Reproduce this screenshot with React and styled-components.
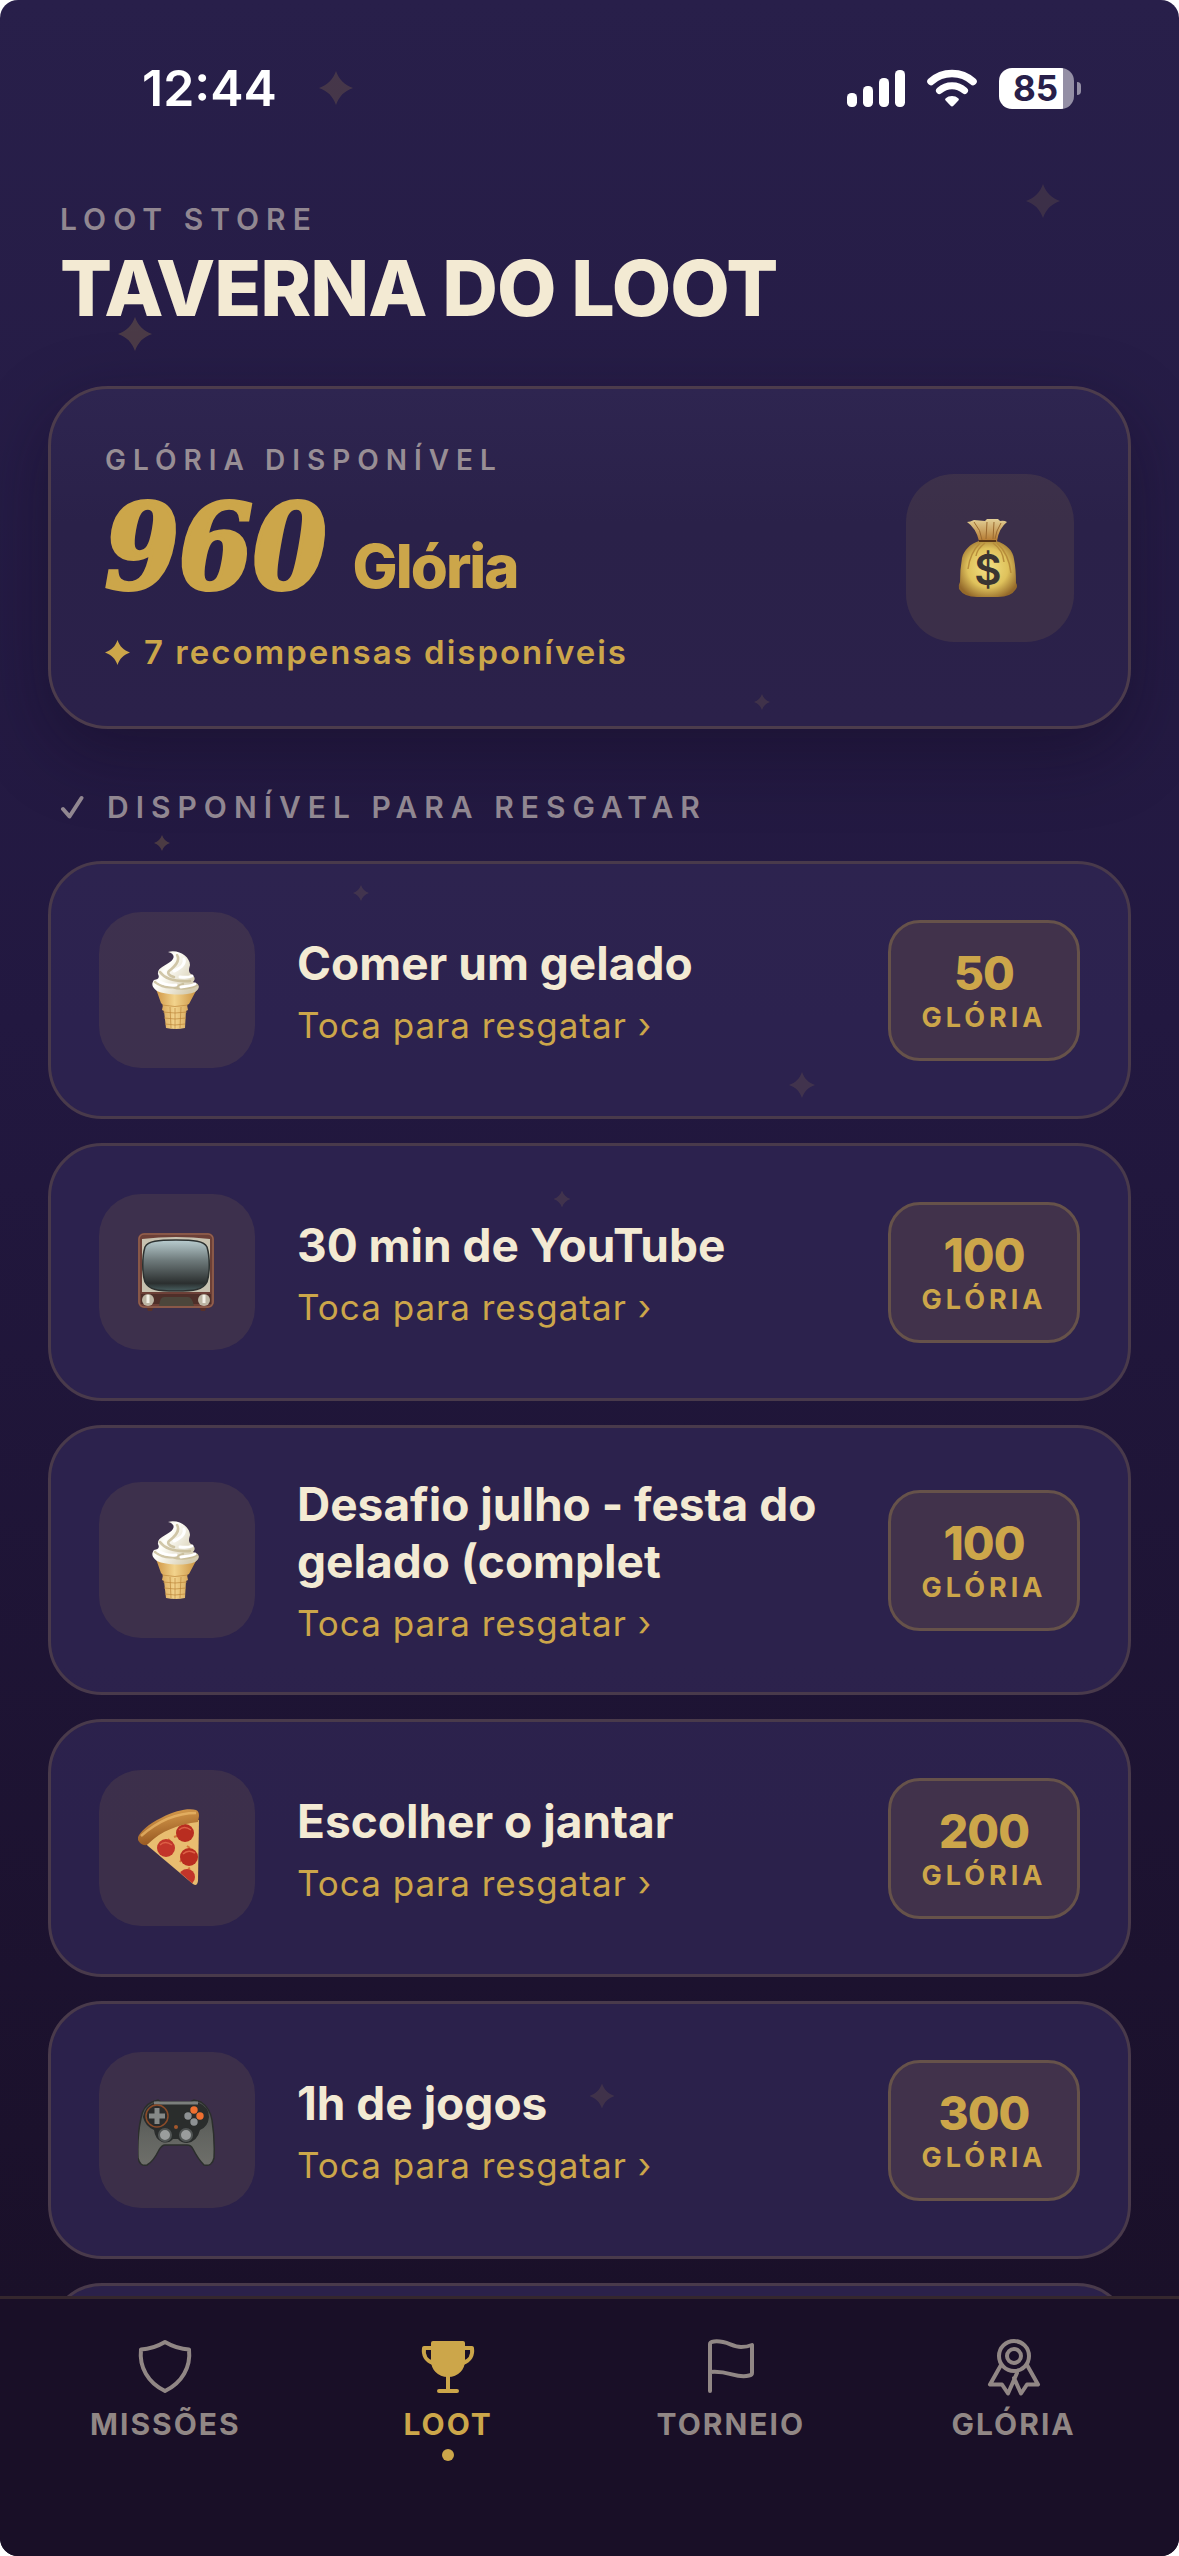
import React from 'react';

import styled, { createGlobalStyle } from 'styled-components';

const GOLD = '#cca64a';
const CREAM = '#f3ead3';
const MUTED = '#918791';

const GlobalStyle = createGlobalStyle`
    * {
        box-sizing: border-box;
    }

    body {
        margin: 0;
        background: #ffffff;
        font-family: Inter, 'Liberation Sans', sans-serif;
    }
`;

const Screen = styled.div`
    position: relative;
    display: flex;
    flex-direction: column;
    height: 100vh;
    overflow: hidden;
    border-radius: 18px;
    color: ${CREAM};
    background: linear-gradient(#281f4a 0%, #221840 40%, #1a1029 90%);
`;

const StatusBar = styled.div`
    flex: none;
    display: flex;
    align-items: center;
    height: 176px;
    padding: 0 98px 0 142px;
    color: #ffffff;
`;

const Clock = styled.div`
    flex: 1;
    font-size: 50px;
    font-weight: 600;
`;

const StatusIcons = styled.div`
    display: flex;
    align-items: center;
    gap: 22px;
`;

const BatteryWrap = styled.div`
    display: flex;
    align-items: center;
    gap: 3px;
`;

const BatteryBody = styled.div`
    width: 75px;
    height: 41px;
    padding-right: 2px;
    border-radius: 13px;
    line-height: 41px;
    text-align: center;
    font-size: 35px;
    font-weight: 700;
    color: #281f4a;
    background: linear-gradient(
        90deg,
        #ffffff ${props => props.$level}%,
        #948fa5 ${props => props.$level}%
    );
`;

const BatteryTip = styled.div`
    width: 4px;
    height: 13px;
    border-radius: 0 4px 4px 0;
    background: #948fa5;
`;

const Content = styled.main`
    flex: 1;
    min-height: 0;
    overflow: hidden;
    padding: 25px 48px 0;
`;

const Header = styled.header`
    display: grid;
    gap: 9px;
    padding: 0 12px;
    margin-bottom: 56px;
`;

const Overline = styled.div`
    line-height: 36px;
    font-size: 30px;
    font-weight: 600;
    letter-spacing: 7px;
    color: ${MUTED};
`;

const PageTitle = styled.h1`
    margin: 0;
    line-height: 84px;
    font-size: 77px;
    font-weight: 800;
    letter-spacing: -1px;
`;

const BalanceCard = styled.section`
    display: flex;
    align-items: center;
    justify-content: space-between;
    padding: 54px;
    margin-bottom: 60px;
    border: 3px solid #4c3c4c;
    border-radius: 60px;
    background: linear-gradient(#2e2550, #2a2149 40%, #2b214a);
    box-shadow: 0 24px 72px rgba(16, 8, 30, 0.38);
`;

const BalanceLabel = styled.div`
    line-height: 34px;
    font-size: 28px;
    font-weight: 600;
    letter-spacing: 7px;
    color: #988e95;
`;

const BalanceRow = styled.div`
    display: flex;
    align-items: baseline;
    gap: 26px;
    height: 155px;
    color: ${GOLD};
`;

const BalanceAmount = styled.span`
    line-height: 140px;
    font-family: 'DejaVu Serif Condensed', 'DejaVu Serif', serif;
    font-size: 118px;
    font-style: italic;
    font-weight: 700;
    -webkit-text-stroke: 4px ${GOLD};
`;

const BalanceUnit = styled.span`
    font-size: 60px;
    font-weight: 800;
    letter-spacing: -2px;
`;

const BalanceNote = styled.div`
    display: flex;
    align-items: center;
    gap: 14px;
    line-height: 40px;
    font-size: 33px;
    font-weight: 600;
    letter-spacing: 2px;
    color: ${GOLD};
`;

const Tile = styled.div`
    flex: none;
    display: grid;
    place-items: center;
    width: ${props => props.$size}px;
    height: ${props => props.$size}px;
    border-radius: ${props => (props.$size > 160 ? 48 : 42)}px;
    background: rgba(204, 166, 74, 0.11);
`;

const SectionTitle = styled.h2`
    display: flex;
    align-items: center;
    gap: 22px;
    margin: 0 0 36px;
    padding: 0 12px;
    line-height: 36px;
    font-size: 30px;
    font-weight: 600;
    letter-spacing: 7px;
    color: ${MUTED};
`;

const RewardList = styled.ul`
    display: grid;
    gap: 24px;
    margin: 0;
    padding: 0;
    list-style: none;
`;

const RewardCard = styled.button`
    display: flex;
    align-items: center;
    gap: 42px;
    width: 100%;
    min-height: 258px;
    padding: 48px;
    border: 3px solid #493a4b;
    border-radius: 54px;
    font: inherit;
    text-align: left;
    color: inherit;
    background: rgba(48, 38, 82, 0.8);
`;

const RewardText = styled.div`
    flex: 1;
    display: grid;
    gap: 12px;
`;

const RewardName = styled.div`
    line-height: 57px;
    font-size: 46px;
    font-weight: 700;
`;

const RewardHint = styled.div`
    line-height: 42px;
    font-size: 35px;
    letter-spacing: 1px;
    color: ${GOLD};
`;

const Price = styled.div`
    flex: none;
    width: 192px;
    padding: 24px 0 21px;
    border: 3px solid #66524a;
    border-radius: 32px;
    text-align: center;
    color: ${GOLD};
    background: #41324b;
`;

const PriceValue = styled.div`
    line-height: 52px;
    font-size: 46px;
    font-weight: 800;
    letter-spacing: -1px;
`;

const PriceUnit = styled.div`
    line-height: 38px;
    font-size: 27px;
    font-weight: 700;
    letter-spacing: 4px;
`;

const TabBar = styled.nav`
    flex: none;
    display: grid;
    grid-template-columns: repeat(4, 1fr);
    align-items: start;
    height: 260px;
    padding: 34px 24px 0;
    border-top: 3px solid #35272e;
    background: #190f27;
`;

const Tab = styled.a`
    display: grid;
    justify-items: center;
    line-height: 50px;
    font-size: 30px;
    font-weight: 700;
    letter-spacing: 2px;
    text-decoration: none;
    color: ${props => (props.$active ? GOLD : '#918785')};
`;

const TabDot = styled.span`
    width: 12px;
    height: 12px;
    border-radius: 50%;
    background: ${GOLD};
`;

const StarShape = styled.svg`
    display: block;
    width: ${props => props.$size}px;
    height: ${props => props.$size}px;
    fill: ${GOLD};
`;

const Sky = styled.div`
    position: absolute;
    inset: 0;
    pointer-events: none;
`;

const SkyStar = styled.div`
    position: absolute;
    left: ${props => props.$x}%;
    top: ${props => props.$y}%;
    opacity: ${props => props.$opacity};
    transform: translate(-50%, -50%);
`;

const Star = ({ size }) => (
    <StarShape $size={size} viewBox="0 0 24 24" aria-hidden="true">
        <path d="M12 0C14 6 18 10 24 12C18 14 14 18 12 24C10 18 6 14 0 12C6 10 10 6 12 0Z" />
    </StarShape>
);

const stars = [
    { x: 28.5, y: 3.43, size: 34, opacity: 0.18 },
    { x: 88.5, y: 7.88, size: 34, opacity: 0.13 },
    { x: 11.45, y: 13.06, size: 34, opacity: 0.22 },
    { x: 64.6, y: 27.47, size: 16, opacity: 0.13 },
    { x: 13.7, y: 33, size: 16, opacity: 0.24 },
    { x: 30.65, y: 34.95, size: 16, opacity: 0.13 },
    { x: 68, y: 42.45, size: 26, opacity: 0.13 },
    { x: 47.7, y: 46.9, size: 17, opacity: 0.13 },
    { x: 51.05, y: 82.02, size: 25, opacity: 0.13 }
];

const SignalIcon = () => (
    <svg width="58" height="38" viewBox="0 0 58 38" fill="#fff">
        <rect x="0" y="24" width="10" height="14" rx="4.500" />
        <rect x="16" y="17" width="10" height="21" rx="4.500" />
        <rect x="32" y="9" width="10" height="29" rx="4.500" />
        <rect x="48" y="1" width="10" height="37" rx="4.500" />
    </svg>
);

const WifiIcon = () => (
    <svg width="50" height="38" viewBox="0 0 50 38" fill="none">
        <path
            d="M4 12.500C15.500 1.700 34.500 1.700 46 12.500"
            stroke="#fff"
            strokeWidth="7.500"
            strokeLinecap="round"
        />
        <path
            d="M12.500 21.500C19.500 15 30.500 15 37.500 21.500"
            stroke="#fff"
            strokeWidth="7"
            strokeLinecap="round"
        />
        <path
            d="M18.500 29.500C22 26.200 28 26.200 31.500 29.500Q32.400 30.500 31.400 31.500L26.400 36.800Q25 38 23.600 36.800L18.600 31.500Q17.600 30.500 18.500 29.500Z"
            fill="#fff"
        />
    </svg>
);

const CheckIcon = () => (
    <svg width="25" height="24" viewBox="0 0 25 24" fill="none">
        <path
            d="M3 14L9.500 21.500L21.500 3"
            stroke={MUTED}
            strokeWidth="4"
            strokeLinecap="round"
            strokeLinejoin="round"
        />
    </svg>
);

const MoneyBag = () => (
    <svg width="78" height="78" viewBox="0 0 78 78">
        <defs>
            <radialGradient id="bagBody" cx="50%" cy="48%" r="58%">
                <stop offset="0" stopColor="#f2e184" />
                <stop offset="0.6" stopColor="#dfc25c" />
                <stop offset="1" stopColor="#94692a" />
            </radialGradient>
            <linearGradient id="bagNeck" x1="0" x2="0" y1="0" y2="1">
                <stop offset="0" stopColor="#e3cf95" />
                <stop offset="1" stopColor="#b57a31" />
            </linearGradient>
        </defs>
        <path
            d="M16 3Q19 3 23 1L34 2L36 0H47L49 2Q53 1 56 3Q48 9 46 22H28Q25 9 16 3Z"
            fill="url(#bagNeck)"
        />
        <path
            d="M23 3Q30 11 31 21M36 3L35 20M43 3L42 20M50 4Q45 12 44 20"
            stroke="#9a6a30"
            strokeWidth="1"
            fill="none"
        />
        <path
            d="M28 22H45C56 25 62 32 63 40Q65 50 65 64Q67 67 65 70Q60 78 47 78H26Q13 78 8 70Q7 66 9 63Q9 50 11 39C13 31 19 25 28 22Z"
            fill="url(#bagBody)"
        />
        <path
            d="M29 24Q19 34 17 50M34 24Q26 30 25 37M42 24Q52 31 53 43M46 24Q58 35 60 54"
            stroke="#b88d3b"
            strokeWidth="1.500"
            fill="none"
        />
        <path d="M28 22H45" stroke="#573517" strokeWidth="2" />
        <text
            x="37"
            y="66"
            textAnchor="middle"
            fontFamily="Inter, sans-serif"
            fontSize="42"
            fontWeight="600"
            fill="#3a3532"
        >
            $
        </text>
    </svg>
);

const IceCream = () => (
    <svg width="78" height="78" viewBox="0 0 78 78">
        <defs>
            <linearGradient id="cone" x1="0" x2="1">
                <stop offset="0" stopColor="#cf9647" />
                <stop offset="0.45" stopColor="#f2d38c" />
                <stop offset="1" stopColor="#ca913f" />
            </linearGradient>
            <linearGradient id="cream" x1="0" x2="1" y1="0" y2="0.6">
                <stop offset="0" stopColor="#d8d0b8" />
                <stop offset="0.4" stopColor="#fffffb" />
                <stop offset="1" stopColor="#d5ccb0" />
            </linearGradient>
        </defs>
        <path
            d="M18 38H59L51 53L49 54L50 59L48 60L47 77Q38 79 28 77L26 60L24 59L25 54L23 52Z"
            fill="url(#cone)"
        />
        <path
            d="M24 54Q37 57 50 54M25 61Q37 63 49 61M26 67Q37 69 48 67M27 73Q37 75 47 73M32 56L33 77M37 57V78M43 56L42 77"
            stroke="#bd873c"
            strokeWidth="1"
            opacity="0.7"
            fill="none"
        />
        <path
            d="M30 1C41 -2 52 6 52 14C51 18 50 21 53 23C58 26 57 29 55 31C63 33 62 38 57 41C47 45 27 44 19 40C14 36 13 33 16 29C20 28 22 27 20 23C19 17 27 15 32 11C38 7 36 2 30 1Z"
            fill="url(#cream)"
        />
        <path
            d="M39 4C43 10 36 16 31 20C29 22 31 25 36 26M22 21C27 28 37 31 52 30M17 31C25 37 35 38 45 33M34 36Q47 40 59 34"
            stroke="#c3b58f"
            strokeWidth="2.500"
            strokeLinecap="round"
            opacity="0.75"
            fill="none"
        />
        <path
            d="M46 8Q48 15 36 20M42 26Q50 27 54 25M20 30Q28 35 38 34M43 36Q53 35 57 33"
            stroke="#fff"
            strokeWidth="3"
            strokeLinecap="round"
            fill="none"
        />
    </svg>
);

const Television = () => (
    <svg width="78" height="78" viewBox="0 0 78 78">
        <defs>
            <linearGradient id="tvScreen" x1="0" x2="0" y1="0" y2="1">
                <stop offset="0" stopColor="#b9cdd0" />
                <stop offset="0.4" stopColor="#6e7a7b" />
                <stop offset="0.85" stopColor="#2b2f2f" />
                <stop offset="1" stopColor="#496061" />
            </linearGradient>
        </defs>
        <path d="M8 73H16L14 78H10ZM61 73H69L67 78H63Z" fill="#57302a" />
        <rect x="0" y="0" width="76" height="75" rx="6" fill="#6d4037" />
        <rect x="1" y="1" width="74" height="73" rx="5" fill="none" stroke="#93604f" strokeWidth="1.500" />
        <path d="M4 6Q38 2 72 6V59H4Z" fill="#c8c2b0" />
        <path
            d="M38 7C56 7 66 8 69 14C72 24 72 40 69 49C65 57 56 58 38 58C20 58 11 57 7 49C4 40 4 24 7 14C10 8 20 7 38 7Z"
            fill="url(#tvScreen)"
            stroke="#2c3130"
            strokeWidth="1.500"
        />
        <path d="M3 61H73V71H3Z" fill="#4f2f29" />
        <path d="M21 73Q22 64 26 64H50Q54 64 56 73Z" fill="#4c463b" />
        <circle cx="10" cy="67" r="6" fill="#bdb6a4" />
        <circle cx="66" cy="67" r="6" fill="#bdb6a4" />
        <path d="M10 62V70M66 62V70" stroke="#f3f0e6" strokeWidth="3" />
    </svg>
);

const Pizza = () => (
    <svg width="78" height="78" viewBox="0 0 78 78">
        <defs>
            <clipPath id="slice">
                <path d="M8 34C22 22 40 14 61 11L60 72Q59 77 55 75Z" />
            </clipPath>
            <linearGradient id="crust" x1="0.3" x2="0.6" y1="0" y2="1">
                <stop offset="0" stopColor="#dba04f" />
                <stop offset="1" stopColor="#8e4f1c" />
            </linearGradient>
        </defs>
        <path d="M6 33C20 22 40 13 61 11L60 72Q59 78 55 75L10 37Z" fill="#e8bd70" />
        <g clipPath="url(#slice)">
            <path
                d="M30 30L34 34M27 40L30 42M49 37L52 39M44 50L42 53M36 28L39 27M52 59L50 60"
                stroke="#d4773a"
                strokeWidth="2"
            />
            <circle cx="47" cy="24" r="9" fill="#b92d20" />
            <circle cx="28" cy="39" r="9" fill="#c2352a" />
            <circle cx="51" cy="48" r="9" fill="#b92d20" />
            <circle cx="49" cy="68" r="8" fill="#c2352a" />
            <path
                d="M41 21Q46 16 53 21M22 36Q27 31 34 36M45 45Q50 40 57 44"
                stroke="#dd6046"
                strokeWidth="1.500"
                fill="none"
            />
        </g>
        <path
            d="M0 31C-2 27 8 16 23 9C38 1 51 -1 58 1Q61 2 61 7L60 13C41 15 23 22 10 35C7 38 2 35 0 31Z"
            fill="url(#crust)"
        />
        <path
            d="M3 27Q29 4 58 4"
            stroke="#edbb6c"
            strokeWidth="2.500"
            fill="none"
            opacity="0.7"
        />
    </svg>
);

const Gamepad = () => (
    <svg width="78" height="78" viewBox="0 0 78 78">
        <defs>
            <linearGradient id="padGrip" x1="0" x2="0" y1="0" y2="1">
                <stop offset="0" stopColor="#4a4e4c" />
                <stop offset="0.5" stopColor="#61635f" />
                <stop offset="1" stopColor="#6e6f6a" />
            </linearGradient>
        </defs>
        <path
            d="M14 11L20 9L23 11H52L56 9L63 11Q72 17 74 29Q77 48 76 67Q74 76 66 74Q60 68 55 58Q53 54 49 54H27Q24 54 21 59Q15 71 9 74Q2 76 0 67Q-1 45 3 27Q5 15 14 11Z"
            fill="url(#padGrip)"
            stroke="#2b2e2c"
            strokeWidth="1.500"
        />
        <path
            d="M16 12H61Q71 16 71 26Q70 36 62 39Q59 51 49 52Q43 52 40 48H35Q31 53 24 51Q17 48 16 39Q7 35 5 26Q7 15 16 12Z"
            fill="#2a2d2c"
        />
        <path d="M16 12H60" stroke="#7b7f7c" strokeWidth="3" />
        <circle cx="19" cy="25" r="11" fill="#292b2b" stroke="#8b4b28" strokeWidth="1.500" />
        <path
            d="M16.500 17H21.500V22.500H27V27.500H21.500V33H16.500V27.500H11V22.500H16.500Z"
            fill="#858987"
        />
        <circle cx="56" cy="19" r="3.700" fill="#ef7030" />
        <circle cx="62" cy="25" r="3.700" fill="#ef7030" />
        <circle cx="50" cy="25" r="3.700" fill="#8d9193" />
        <circle cx="56" cy="31" r="3.700" fill="#8d9193" />
        <circle cx="38" cy="36" r="2" fill="#a3572c" />
        <circle cx="27" cy="44" r="6" fill="#9a9d9d" stroke="#515554" strokeWidth="2" />
        <circle cx="48" cy="44" r="6" fill="#9a9d9d" stroke="#515554" strokeWidth="2" />
    </svg>
);

const TabIcon = ({ children }) => (
    <svg
        width="66"
        height="66"
        viewBox="0 0 66 66"
        fill="none"
        stroke="currentColor"
        strokeWidth="4"
        strokeLinecap="round"
        strokeLinejoin="round"
        aria-hidden="true"
    >
        {children}
    </svg>
);

const ShieldIcon = () => (
    <TabIcon>
        <path d="M33 9Q45 16 57 16.500C59 34 50 50 33 58C16 50 7 34 9 16.500Q21 16 33 9Z" />
    </TabIcon>
);

const TrophyIcon = () => (
    <TabIcon>
        <path
            d="M18 9H48Q49 9 49 10V27C49 36 43 43 33 43S17 36 17 27V10Q17 9 18 9Z"
            fill="currentColor"
            strokeWidth="2"
        />
        <path d="M17 15H9C8 22 11 28 18 30M49 15H57C58 22 55 28 48 30M33 43V58M24 58H42" />
    </TabIcon>
);

const FlagIcon = () => (
    <TabIcon>
        <path d="M12 58V11Q12 9 16 8.500C28 7 34 14 43 14Q49 14 54 12V40Q54 42 51 42.500C38 46 31 37 12 39" />
    </TabIcon>
);

const RibbonIcon = () => (
    <TabIcon>
        <circle cx="33" cy="23" r="15" />
        <circle cx="33" cy="23" r="7" />
        <path d="M20 32L9 51.500H21L27 60.500L36 40M46 32L57 51.500H46L40 60.500L33 45" />
    </TabIcon>
);

const rewards = [
    { id: 1, name: 'Comer um gelado', price: 50, Icon: IceCream },
    { id: 2, name: '30 min de YouTube', price: 100, Icon: Television },
    {
        id: 3,
        name: 'Desafio julho - festa do gelado (complet',
        price: 100,
        Icon: IceCream
    },
    { id: 4, name: 'Escolher o jantar', price: 200, Icon: Pizza },
    { id: 5, name: '1h de jogos', price: 300, Icon: Gamepad }
];

const tabs = [
    { name: 'MISSÕES', Icon: ShieldIcon },
    { name: 'LOOT', Icon: TrophyIcon, active: true },
    { name: 'TORNEIO', Icon: FlagIcon },
    { name: 'GLÓRIA', Icon: RibbonIcon }
];

const Reward = ({ name, price, Icon }) => (
    <li>
        <RewardCard type="button">
            <Tile $size={156}>
                <Icon />
            </Tile>
            <RewardText>
                <RewardName>{name}</RewardName>
                <RewardHint>Toca para resgatar ›</RewardHint>
            </RewardText>
            <Price>
                <PriceValue>{price}</PriceValue>
                <PriceUnit>GLÓRIA</PriceUnit>
            </Price>
        </RewardCard>
    </li>
);

const Balance = () => (
    <BalanceCard>
        <div>
            <BalanceLabel>GLÓRIA DISPONÍVEL</BalanceLabel>
            <BalanceRow>
                <BalanceAmount>960</BalanceAmount>
                <BalanceUnit>Glória</BalanceUnit>
            </BalanceRow>
            <BalanceNote>
                <Star size={25} />7 recompensas disponíveis
            </BalanceNote>
        </div>
        <Tile $size={168}>
            <MoneyBag />
        </Tile>
    </BalanceCard>
);

const App = () => (
    <>
        <GlobalStyle />
        <Screen>
            <StatusBar>
                <Clock>12:44</Clock>
                <StatusIcons>
                    <SignalIcon />
                    <WifiIcon />
                    <BatteryWrap>
                        <BatteryBody $level={85}>85</BatteryBody>
                        <BatteryTip />
                    </BatteryWrap>
                </StatusIcons>
            </StatusBar>
            <Content>
                <Header>
                    <Overline>LOOT STORE</Overline>
                    <PageTitle>TAVERNA DO LOOT</PageTitle>
                </Header>
                <Balance />
                <SectionTitle>
                    <CheckIcon />
                    DISPONÍVEL PARA RESGATAR
                </SectionTitle>
                <RewardList>
                    {rewards.map(reward => (
                        <Reward key={reward.id} {...reward} />
                    ))}
                    <RewardCard as="li" />
                </RewardList>
            </Content>
            <TabBar>
                {tabs.map(({ name, Icon, active }) => (
                    <Tab key={name} href="#" $active={active}>
                        <Icon />
                        {name}
                        {active && <TabDot />}
                    </Tab>
                ))}
            </TabBar>
            <Sky>
                {stars.map(({ x, y, size, opacity }) => (
                    <SkyStar key={`${x}-${y}`} $x={x} $y={y} $opacity={opacity}>
                        <Star size={size} />
                    </SkyStar>
                ))}
            </Sky>
        </Screen>
    </>
);

export default App;
